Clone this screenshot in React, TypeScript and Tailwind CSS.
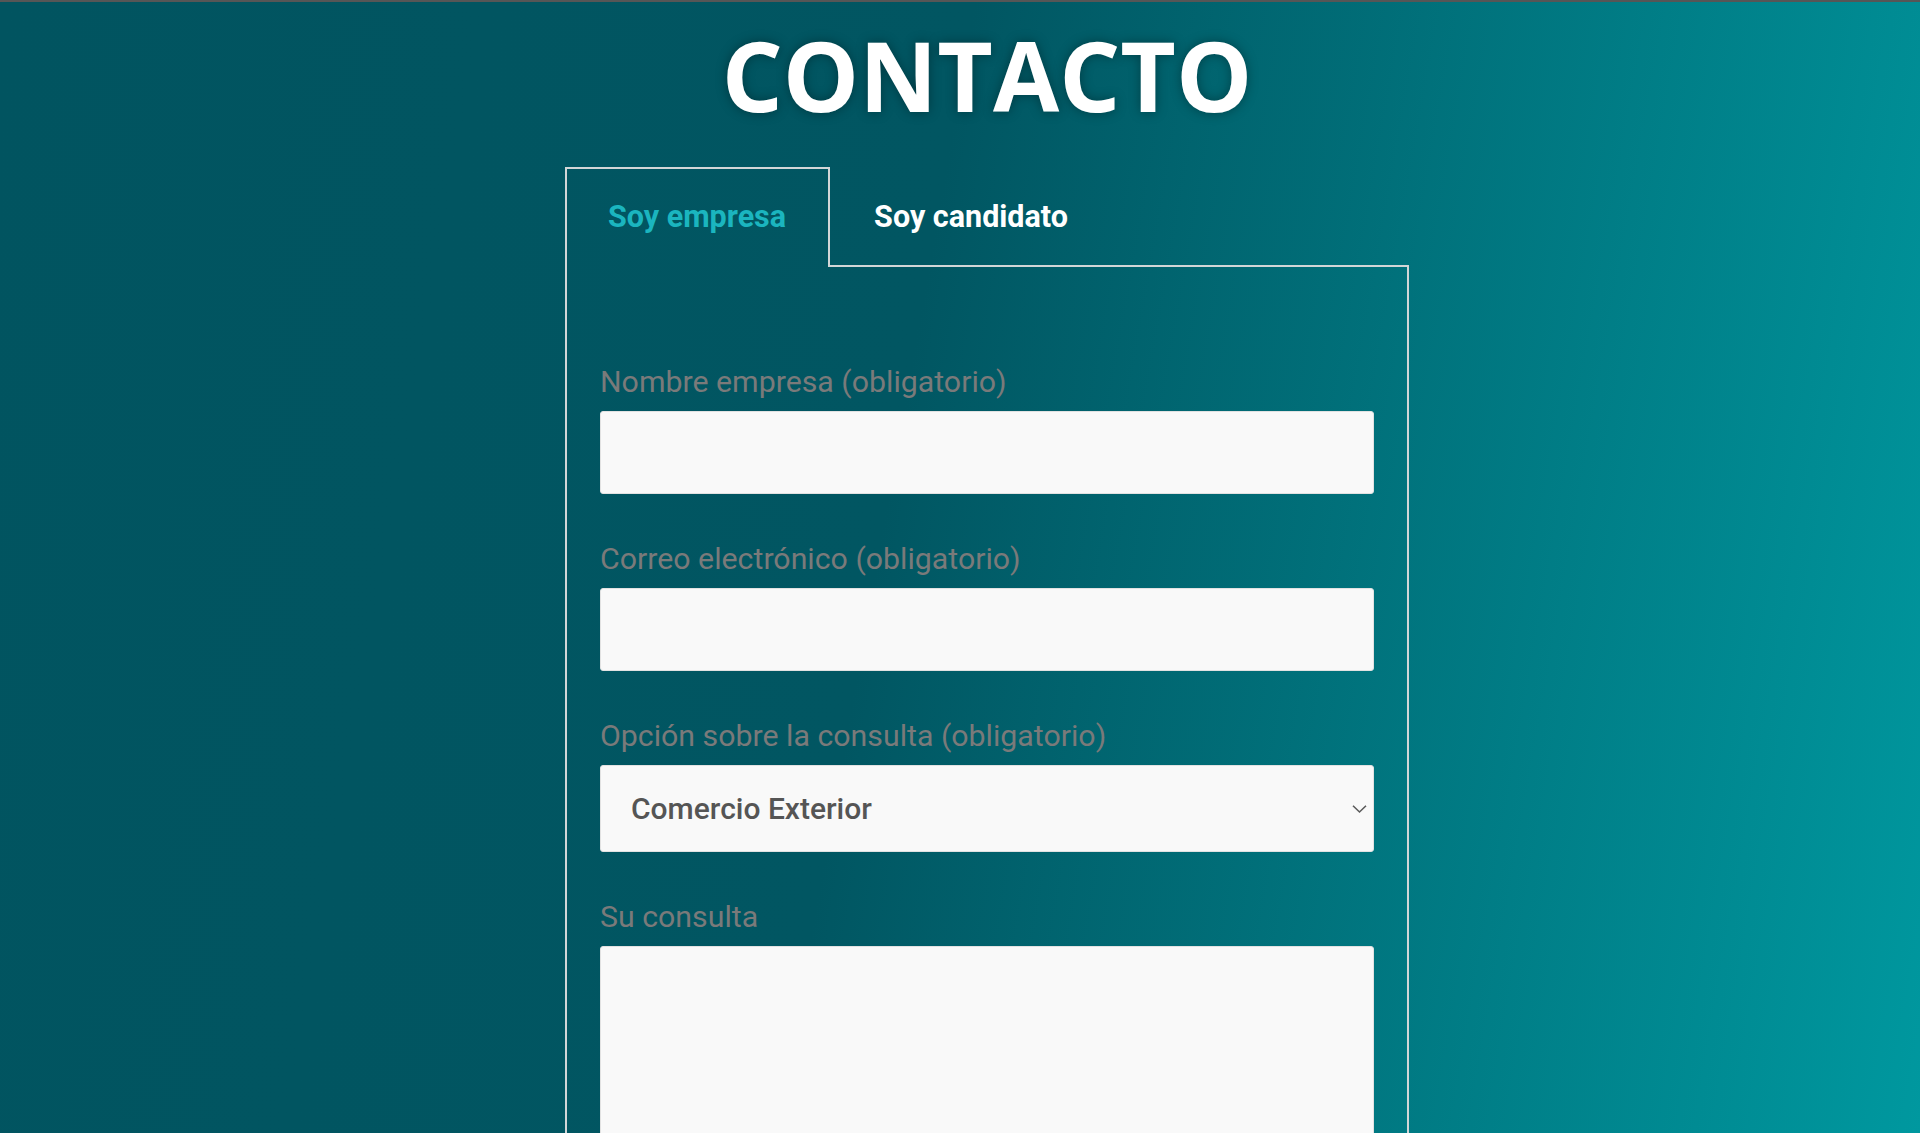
import React from 'react';

const Field: React.FC<{ label: string; children: React.ReactNode }> = ({ label, children }) => (
    <div className="flex flex-col">
        <label className="text-[30.3px] leading-[36px] text-[#7a7a7a] mb-[11px]">{label}</label>
        {children}
    </div>
);

const inputClass = 'w-full h-[83px] bg-[#f9f9f9] rounded-[3px] border border-[#e2e2e2] outline-none px-[30px] text-[30px] text-[#555]';

const App: React.FC = () => {
    return (
        <div
            className="h-[1133px] overflow-hidden border-t-2 border-[#565656] bg-[linear-gradient(100deg,#015460_0%,#015662_46%,#00989f_100%)]"
            style={{ fontFamily: 'Roboto, "Liberation Sans", sans-serif' }}
        >
            <div className="ml-[565px] w-[844px]">
                <h1
                    className="mt-[25px] text-center text-[96px] leading-none font-bold text-white [text-shadow:0_0_12px_rgba(0,0,0,0.35)]"
                    style={{ fontFamily: '"Open Sans", "Liberation Sans", sans-serif' }}
                >
                    CONTACTO
                </h1>

                {/* tabs */}
                <div className="mt-[44px] flex h-[100px]">
                    <button className="h-full pl-[41px] pr-[42px] pb-[2px] border-2 border-b-0 border-[#d2d6d7] text-[30.5px] font-bold text-[#1bb5bf]">
                        Soy empresa
                    </button>
                    <div className="flex-1 flex items-center pl-[44px] pt-[2px] border-b-2 border-[#d2d6d7]">
                        <button className="text-[30.5px] font-bold text-white">Soy candidato</button>
                    </div>
                </div>

                {/* form */}
                <div className="border-l-2 border-r-2 border-[#d2d6d7] pt-[97px] px-[33px] pb-10 flex flex-col gap-[47px]">
                    <Field label="Nombre empresa (obligatorio)">
                        <input type="text" className={inputClass} />
                    </Field>
                    <Field label="Correo electrónico (obligatorio)">
                        <input type="email" className={inputClass} />
                    </Field>
                    <Field label="Opción sobre la consulta (obligatorio)">
                        <div className="relative">
                            <select className="w-full h-[87px] appearance-none bg-[#f9f9f9] rounded-[3px] border border-[#e2e2e2] outline-none pl-[30px] text-[30px] font-medium text-[#555]">
                                <option>Comercio Exterior</option>
                                <option>Recursos Humanos</option>
                                <option>Otros</option>
                            </select>
                            <svg
                                className="absolute right-[7px] top-1/2 -translate-y-1/2 pointer-events-none"
                                width="15"
                                height="9"
                                viewBox="0 0 15 9"
                                fill="none"
                            >
                                <path d="M1 1.2 L7.5 7.5 L14 1.2" stroke="#5c5c5c" strokeWidth="1.6" />
                            </svg>
                        </div>
                    </Field>
                    <Field label="Su consulta">
                        <textarea className="w-full h-[260px] resize-none bg-[#f9f9f9] rounded-[3px] border border-[#e2e2e2] outline-none p-[30px] text-[30px] text-[#555]" />
                    </Field>
                </div>
            </div>
        </div>
    );
};

export default App;
